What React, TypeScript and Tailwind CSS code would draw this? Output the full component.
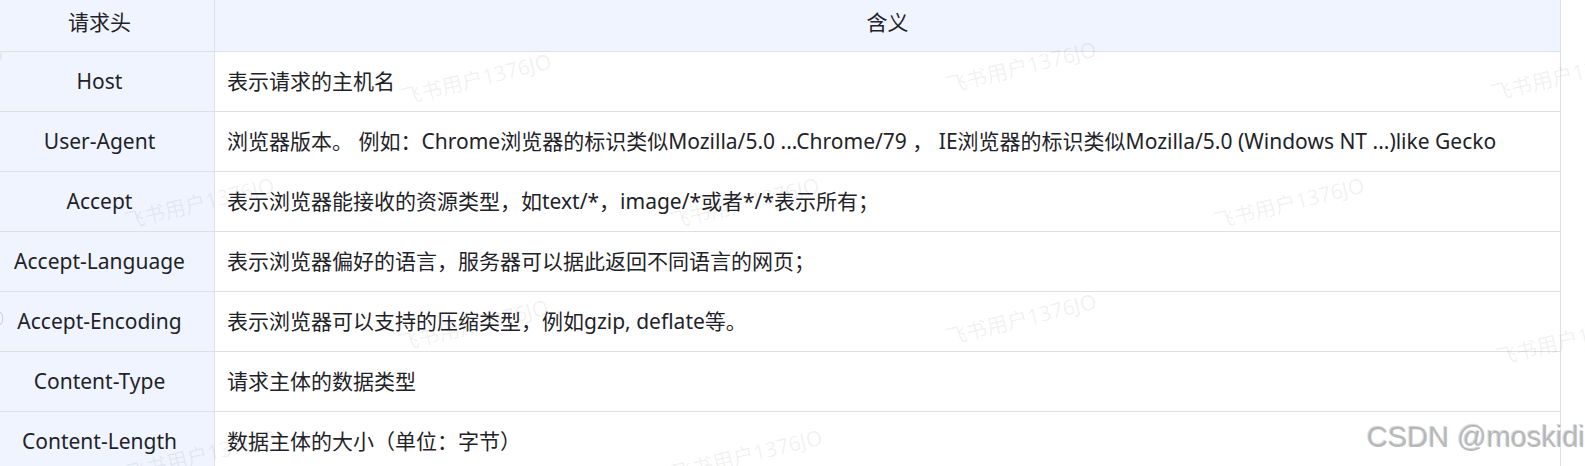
import React from "react";

const rows: [string, string][] = [
  ["Host", "表示请求的主机名"],
  [
    "User-Agent",
    "浏览器版本。 例如：Chrome浏览器的标识类似Mozilla/5.0 ...Chrome/79 ， IE浏览器的标识类似Mozilla/5.0 (Windows NT ...)like Gecko",
  ],
  ["Accept", "表示浏览器能接收的资源类型，如text/*，image/*或者*/*表示所有；"],
  ["Accept-Language", "表示浏览器偏好的语言，服务器可以据此返回不同语言的网页；"],
  ["Accept-Encoding", "表示浏览器可以支持的压缩类型，例如gzip, deflate等。"],
  ["Content-Type", "请求主体的数据类型"],
  ["Content-Length", "数据主体的大小（单位：字节）"],
];

const marks: { x: number; y: number }[] = [
  { x: 405, y: 62 },
  { x: 950, y: 50 },
  { x: 1495, y: 58 },
  { x: 128, y: 186 },
  { x: 673, y: 186 },
  { x: 1218, y: 186 },
  { x: 402, y: 308 },
  { x: 950, y: 302 },
  { x: 1500, y: 322 },
  { x: 130, y: 438 },
  { x: 676, y: 438 },
];

export default function App() {
  return (
    <div
      className="relative w-[1585px] h-[466px] overflow-hidden bg-white text-[#1f2329] text-[21px]"
      style={{ fontFamily: '"Noto Sans", "Noto Sans CJK SC", sans-serif' }}
    >
      <div className="w-[1561px] border-r border-[#dee0e3]">
        <div className="flex h-[52px] border-b border-[#dee0e3] bg-[#eff4ff]">
          <div className="w-[215px] shrink-0 flex items-center justify-center pr-[15px] pb-[6px] border-r border-[#dee0e3]">
            请求头
          </div>
          <div className="flex-1 flex items-center justify-center pb-[6px]">含义</div>
        </div>
        {rows.map(([k, v]) => (
          <div key={k} className="flex h-[60px] shrink-0 border-b border-[#dee0e3]">
            <div className="w-[215px] shrink-0 flex items-center justify-center pr-[15px] bg-[#eff4ff] border-r border-[#dee0e3]">
              {k}
            </div>
            <div className="flex-1 flex items-center pl-[12px] whitespace-nowrap">{v}</div>
          </div>
        ))}
      </div>

      {marks.map((m, i) => (
        <div
          key={i}
          className="absolute pointer-events-none whitespace-nowrap text-[21px] text-[rgba(31,35,41,0.07)] origin-bottom-left rotate-[-14deg]"
          style={{ left: m.x, top: m.y + 20 }}
        >
          飞书用户1376JO
        </div>
      ))}

      <div className="absolute left-[-8px] top-[311px] w-[11px] h-[15px] rounded-full border border-[#c9ccd1]" />
      <div className="absolute left-[-6px] top-[52px] w-[8px] h-[9px] rounded-full bg-[#e4e6ea]" />

      <div
        className="absolute right-[0px] top-[416px] whitespace-nowrap text-[29px] text-[rgba(165,165,165,0.75)] [text-shadow:1px_1px_1px_rgba(255,255,255,0.9),-1px_-1px_1px_rgba(120,120,120,0.35)]"
        style={{ fontFamily: '"Liberation Sans", Arial, sans-serif' }}
      >
        CSDN @moskidi
      </div>
    </div>
  );
}
